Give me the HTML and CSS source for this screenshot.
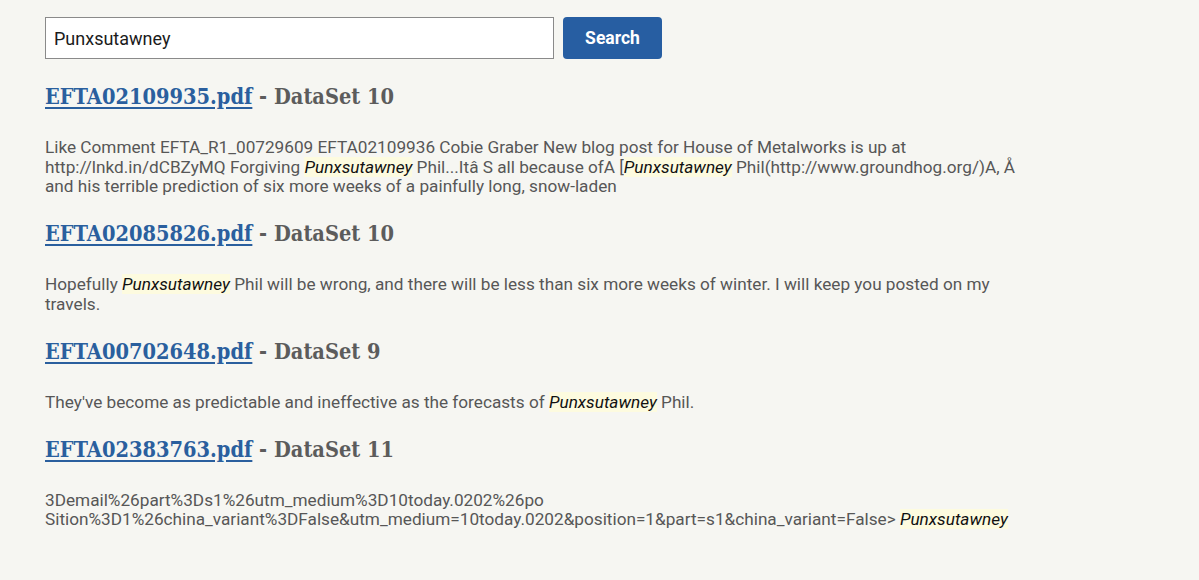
FILE: index.html
```html
<!DOCTYPE html>
<html>
<head>
<meta charset="utf-8">
<link rel="stylesheet" href="styles.css">
</head>
<body>
<main class="page">
  <form class="search">
    <input class="search-input" type="text" value="Punxsutawney">
    <button class="search-btn" type="button">Search</button>
  </form>

  <section class="result">
    <h2 class="result-title"><a href="#">EFTA02109935.pdf</a> - DataSet 10</h2>
    <p class="snippet">Like Comment EFTA_R1_00729609 EFTA02109936 Cobie Graber New blog post for House of Metalworks is up at http://lnkd.in/dCBZyMQ Forgiving <mark>Punxsutawney</mark> Phil...Itâ S all because ofA [<mark>Punxsutawney</mark> Phil(http://www.groundhog.org/)A, Å and his terrible prediction of six more weeks of a painfully long, snow-laden</p>
  </section>

  <section class="result">
    <h2 class="result-title"><a href="#">EFTA02085826.pdf</a> - DataSet 10</h2>
    <p class="snippet">Hopefully <mark>Punxsutawney</mark> Phil will be wrong, and there will be less than six more weeks of winter. I will keep you posted on my travels.</p>
  </section>

  <section class="result">
    <h2 class="result-title"><a href="#">EFTA00702648.pdf</a> - DataSet 9</h2>
    <p class="snippet">They've become as predictable and ineffective as the forecasts of <mark>Punxsutawney</mark> Phil.</p>
  </section>

  <section class="result">
    <h2 class="result-title"><a href="#">EFTA02383763.pdf</a> - DataSet 11</h2>
    <p class="snippet">3Demail%26part%3Ds1%26utm_medium%3D10today.0202%26po Sition%3D1%26china_variant%3DFalse&amp;utm_medium=10today.0202&amp;position=1&amp;part=s1&amp;china_variant=False&gt; <mark>Punxsutawney</mark></p>
  </section>
</main>
</body>
</html>
```
FILE: styles.css
```css
html, body {
  margin: 0;
  padding: 0;
  background: #f6f6f2;
}
body {
  font-family: Roboto, "Liberation Sans", sans-serif;
  color: #575757;
}
.page {
  padding: 17px 0 0 45px;
  width: 995px;
}
.search {
  display: flex;
  gap: 9px;
  margin: 0 0 25px 0;
}
.search-input {
  box-sizing: border-box;
  flex: none;
  width: 509px;
  height: 42px;
  border: 1px solid #8a8a8a;
  background: #fff;
  padding: 0 8px;
  font-family: Roboto, "Liberation Sans", sans-serif;
  font-size: 18px;
  color: #1b1b1b;
  outline: none;
}
.search-btn {
  box-sizing: border-box;
  flex: none;
  width: 99px;
  height: 42px;
  border: 0;
  border-radius: 4px;
  background: #275ea2;
  color: #fff;
  font-family: Roboto, "Liberation Sans", sans-serif;
  font-weight: 700;
  font-size: 17.5px;
}
.result-title {
  margin: 0 0 28px 0;
  font-family: "DejaVu Serif Condensed", "DejaVu Serif", serif;
  font-weight: 700;
  font-size: 21.6px;
  line-height: 26px;
  color: #5c5c5c;
}
.result-title a {
  color: #2a5f9e;
  text-decoration: underline;
  text-decoration-thickness: 2px;
  text-underline-offset: 3px;
}
.snippet {
  margin: 0 0 24.5px 0;
  font-size: 17.2px;
  line-height: 19.5px;
}
.snippet mark {
  background: #fdfbdf;
  color: #111;
  font-style: italic;
}
```
